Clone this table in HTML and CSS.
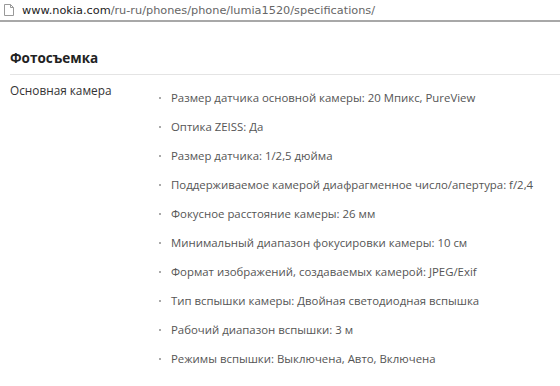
FILE: index.html
```html
<!DOCTYPE html>
<html lang="ru">
<head>
<meta charset="utf-8">
<link rel="stylesheet" href="styles.css">
</head>
<body>
<div class="urlbar">
  <svg class="page-icon" width="10" height="12" viewBox="0 0 10 12"><path d="M0.5 0.5H6.5L9.5 3.5V11.5H0.5Z" fill="#fff" stroke="#999"/><path d="M6.5 0.5V3.5H9.5" fill="none" stroke="#999"/></svg>
  <span class="host">www.nokia.com</span><span class="path">/ru-ru/phones/phone/lumia1520/specifications/</span>
</div>
<div class="content">
  <h2 class="section-title">Фотосъемка</h2>
  <div class="spec-row">
    <div class="spec-name">Основная камера</div>
    <ul class="spec-list">
      <li>Размер датчика основной камеры: 20 Мпикс, PureView</li>
      <li>Оптика ZEISS: Да</li>
      <li>Размер датчика: 1/2,5 дюйма</li>
      <li>Поддерживаемое камерой диафрагменное число/апертура: f/2,4</li>
      <li>Фокусное расстояние камеры: 26 мм</li>
      <li>Минимальный диапазон фокусировки камеры: 10 см</li>
      <li>Формат изображений, создаваемых камерой: JPEG/Exif</li>
      <li>Тип вспышки камеры: Двойная светодиодная вспышка</li>
      <li>Рабочий диапазон вспышки: 3 м</li>
      <li>Режимы вспышки: Выключена, Авто, Включена</li>
    </ul>
  </div>
</div>
</body>
</html>
```
FILE: styles.css
```css
html, body { margin: 0; padding: 0; background: #fff; }
body { width: 560px; height: 386px; overflow: hidden; font-family: "Open Sans", "Noto Sans", sans-serif; }
.urlbar {
  height: 20px;
  border-bottom: 2px solid #a8a8a8;
  display: flex;
  align-items: center;
  padding-left: 4px;
  font-family: "DejaVu Sans", sans-serif;
  font-size: 11.3px;
  box-sizing: content-box;
}
.page-icon { margin-right: 8px; }
.host { color: #222; }
.path { color: #666; }
.content { padding: 0 0 0 10px; }
.section-title {
  margin: 27px 0 0 0;
  font-size: 13.5px;
  font-weight: 700;
  color: #222;
  height: 25px;
  line-height: 18px;
  border-bottom: 1px solid #e4e4e4;
}
.spec-row { display: flex; padding-top: 6px; }
.spec-name { width: 140px; font-size: 11.8px; color: #333; line-height: 18px; flex: none; }
.spec-list { list-style: none; margin: 8px 0 0 0; padding: 0; }
.spec-list li {
  font-size: 11.4px; color: #555; line-height: 18px; height: 29px;
  padding-left: 21px; position: relative; white-space: nowrap;
}
.spec-list li::before {
  content: "";
  position: absolute; left: 9px; top: 8px;
  width: 2px; height: 2px; background: #aaa;
}
```
